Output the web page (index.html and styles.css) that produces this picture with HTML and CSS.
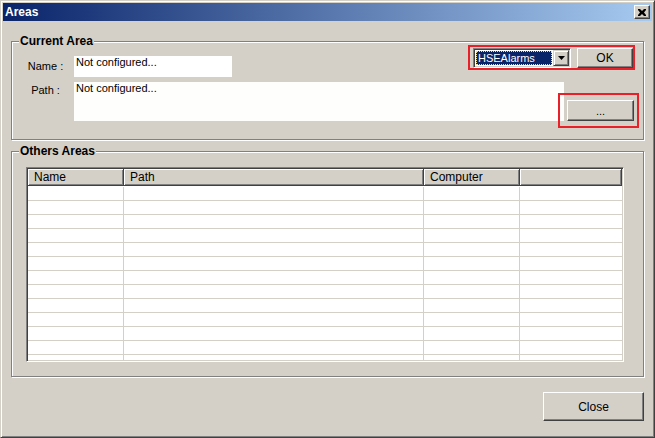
FILE: index.html
```html
<!DOCTYPE html>
<html lang="en">
<head>
<meta charset="utf-8">
<title>Areas</title>
<link rel="stylesheet" href="styles.css">
</head>
<body>
<div class="window">
  <div class="titlebar">
    <span class="title">Areas</span>
    <button class="cap-btn" aria-label="Close">
      <svg width="8" height="7" viewBox="0 0 8 7"><path d="M0 0h2l2 2 2-2h2v1L6 3.5 8 6v1H6L4 5 2 7H0V6l2-2.5L0 1z" fill="#000"/></svg>
    </button>
  </div>
  <div class="content">
    <section class="group group-current">
      <h2 class="group-label">Current Area</h2>
      <div class="form">
        <div class="row row-name">
          <span class="label label-name">Name :</span>
          <div class="field field-name">Not configured...</div>
        </div>
        <div class="row row-path">
          <span class="label label-path">Path :</span>
          <div class="field field-path">Not configured...</div>
        </div>
      </div>
      <div class="actions">
        <div class="mark mark-top">
          <div class="combo">
            <div class="combo-value"><span class="combo-sel">HSEAlarms</span></div>
            <div class="combo-arrow">
              <svg width="7" height="4" viewBox="0 0 7 4"><path d="M0 0h7L3.5 4z" fill="#000"/></svg>
            </div>
          </div>
          <button class="btn btn-ok">OK</button>
        </div>
        <div class="mark mark-browse">
          <button class="btn btn-browse">...</button>
        </div>
      </div>
    </section>

    <section class="group group-others">
      <h2 class="group-label">Others Areas</h2>
      <div class="list">
        <div class="list-head">
          <div class="hcell c-name">Name</div>
          <div class="hcell c-path">Path</div>
          <div class="hcell c-comp">Computer</div>
          <div class="hcell c-rest"></div>
        </div>
        <div class="list-body">
          <div class="lrow"><div class="cell c-name"></div><div class="cell c-path"></div><div class="cell c-comp"></div><div class="cell c-rest"></div></div>
          <div class="lrow"><div class="cell c-name"></div><div class="cell c-path"></div><div class="cell c-comp"></div><div class="cell c-rest"></div></div>
          <div class="lrow"><div class="cell c-name"></div><div class="cell c-path"></div><div class="cell c-comp"></div><div class="cell c-rest"></div></div>
          <div class="lrow"><div class="cell c-name"></div><div class="cell c-path"></div><div class="cell c-comp"></div><div class="cell c-rest"></div></div>
          <div class="lrow"><div class="cell c-name"></div><div class="cell c-path"></div><div class="cell c-comp"></div><div class="cell c-rest"></div></div>
          <div class="lrow"><div class="cell c-name"></div><div class="cell c-path"></div><div class="cell c-comp"></div><div class="cell c-rest"></div></div>
          <div class="lrow"><div class="cell c-name"></div><div class="cell c-path"></div><div class="cell c-comp"></div><div class="cell c-rest"></div></div>
          <div class="lrow"><div class="cell c-name"></div><div class="cell c-path"></div><div class="cell c-comp"></div><div class="cell c-rest"></div></div>
          <div class="lrow"><div class="cell c-name"></div><div class="cell c-path"></div><div class="cell c-comp"></div><div class="cell c-rest"></div></div>
          <div class="lrow"><div class="cell c-name"></div><div class="cell c-path"></div><div class="cell c-comp"></div><div class="cell c-rest"></div></div>
          <div class="lrow"><div class="cell c-name"></div><div class="cell c-path"></div><div class="cell c-comp"></div><div class="cell c-rest"></div></div>
          <div class="lrow"><div class="cell c-name"></div><div class="cell c-path"></div><div class="cell c-comp"></div><div class="cell c-rest"></div></div>
          <div class="lrow"><div class="cell c-name"></div><div class="cell c-path"></div><div class="cell c-comp"></div><div class="cell c-rest"></div></div>
        </div>
      </div>
    </section>

    <div class="footer">
      <button class="btn btn-close">Close</button>
    </div>
  </div>
</div>
</body>
</html>
```

FILE: styles.css
```css
* { box-sizing: border-box; }

html, body {
  margin: 0;
  padding: 0;
  background: #d4d0c8;
}

body {
  font-family: "Liberation Sans", Arial, sans-serif;
  font-size: 11px;
  line-height: 13px;
  color: #000;
}

.window {
  width: 655px;
  height: 438px;
  background: #d4d0c8;
  border: 1px solid;
  border-color: #d4d0c8 #404040 #404040 #d4d0c8;
  box-shadow: inset 1px 1px 0 #fff, inset -1px -1px 0 #808080;
  padding: 2px;
  display: flex;
  flex-direction: column;
}

.titlebar {
  height: 18px;
  background: linear-gradient(to right, #0a246a, #a6caf0);
  display: flex;
  align-items: center;
  padding: 0 2px 0 2px;
}

.title {
  color: #fff;
  font-weight: bold;
  font-size: 12px;
  flex: 1;
}

.cap-btn {
  width: 16px;
  height: 14px;
  padding: 0;
  margin: 0;
  background: #d4d0c8;
  border: 1px solid;
  border-color: #fff #404040 #404040 #fff;
  box-shadow: inset -1px -1px 0 #808080;
  display: flex;
  align-items: center;
  justify-content: center;
}

.cap-btn svg { display: block; }

.content {
  flex: 1;
  display: flex;
  flex-direction: column;
  padding: 20px 8px 0 8px;
}

.group {
  position: relative;
  border: 1px solid #808080;
  box-shadow: inset 1px 1px 0 #fff, 1px 1px 0 #fff;
  width: 633px;
  margin: 0;
}

.group-label {
  position: absolute;
  top: -7px;
  left: 7px;
  margin: 0;
  padding: 0 1px 0 1px;
  background: #d4d0c8;
  font-size: 12px;
  font-weight: bold;
  line-height: 13px;
}

.group-current {
  height: 99px;
  display: flex;
  padding: 3px 4px 0 5px;
}

.form {
  margin-top: 11px;
  display: flex;
  flex-direction: column;
  gap: 5px;
  flex: none;
}

.row {
  display: flex;
  align-items: flex-start;
}

.label {
  width: 57px;
  text-align: center;
}

.label-name { padding-top: 4px; }
.label-path { padding-top: 2px; }

.field {
  background: #fff;
  padding: 0 2px;
}

.field-name { width: 158px; height: 21px; }
.field-path { width: 490px; height: 39px; background: #fefefc; }

/* the action column reaches back over the end of the path field */
.actions {
  margin-left: -96px;
  flex: none;
  display: flex;
  flex-direction: column;
  align-items: flex-end;
}

.mark {
  border: 2px solid #e8202a;
}

.mark-top {
  display: flex;
  gap: 6px;
  padding: 1px 0 0 3px;
  margin-right: 4px;
}

.mark-browse {
  margin-top: 23px;
  padding: 5px 3px 5px 7px;
}

.combo {
  width: 98px;
  height: 20px;
  background: #fff;
  border: 1px solid;
  border-color: #808080 #fff #fff #808080;
  box-shadow: inset 1px 1px 0 #404040, inset -1px -1px 0 #d4d0c8;
  padding: 2px;
  display: flex;
}

.combo-value {
  flex: 1;
  padding-right: 1px;
}

.combo-sel {
  display: block;
  height: 100%;
  background: #0a246a;
  color: #fff;
  outline: 1px dotted #f0e0a0;
  outline-offset: -1px;
  padding: 1px 2px 0 2px;
  line-height: 13px;
}

.combo-arrow {
  width: 16px;
  margin: -1px -1px -1px 0;
  background: #d4d0c8;
  border: 1px solid;
  border-color: #d4d0c8 #404040 #404040 #d4d0c8;
  box-shadow: inset 1px 1px 0 #fff, inset -1px -1px 0 #808080;
  display: flex;
  align-items: center;
  justify-content: center;
}

.combo-arrow svg { display: block; }

.btn {
  font-family: "Liberation Sans", Arial, sans-serif;
  font-size: 11px;
  color: #000;
  background: #d4d0c8;
  border: 1px solid;
  border-color: #fff #404040 #404040 #fff;
  box-shadow: inset -1px -1px 0 #808080;
  padding: 0;
  margin: 0;
}

.btn-ok { width: 56px; height: 20px; font-size: 12px; }
.btn-browse { width: 67px; height: 21px; }
.btn-close { width: 101px; height: 29px; font-size: 12px; }

.group-others {
  height: 226px;
  margin-top: 11px;
  padding: 15px 19px 14px 14px;
}

.list {
  width: 598px;
  height: 195px;
  background: #fff;
  border: 1px solid;
  border-color: #808080 #fff #fff #808080;
  box-shadow: inset 1px 1px 0 #404040, inset -1px -1px 0 #d4d0c8;
  padding: 1px;
  display: flex;
  flex-direction: column;
  overflow: hidden;
}

.list-head {
  display: flex;
  height: 17px;
  flex: none;
}

.hcell {
  height: 17px;
  background: #d4d0c8;
  border-right: 1px solid #404040;
  border-bottom: 1px solid #404040;
  box-shadow: inset 1px 1px 0 #fff, inset -1px -1px 0 #808080;
  padding: 2px 0 0 6px;
  line-height: 13px;
  font-size: 12px;
}

.c-name { width: 96px; }
.c-path { width: 300px; }
.c-comp { width: 96px; }
.c-rest { width: 102px; }

.list-body {
  flex: 1;
  overflow: hidden;
  padding-top: 1px;
}

.lrow {
  display: flex;
  height: 14px;
}

.cell {
  height: 14px;
  border-right: 1px solid #d4d0c8;
  border-bottom: 1px solid #d4d0c8;
}

.cell.c-rest { border-right: none; }

.footer {
  display: flex;
  justify-content: flex-end;
  padding-top: 15px;
}
```
